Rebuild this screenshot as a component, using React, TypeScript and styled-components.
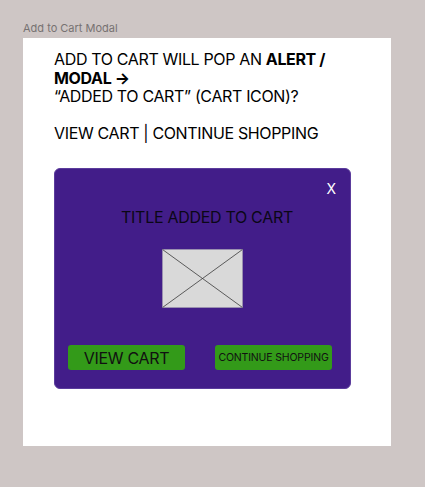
import React from "react";
import styled, { createGlobalStyle } from "styled-components";

const Global = createGlobalStyle`
  html, body { margin: 0; padding: 0; background: #cec6c5; }
  body { font-family: Inter, "Noto Sans", sans-serif; }
`;

const Page = styled.div`
  padding: 22px 0 0 23px;
  width: 425px;
  height: 487px;
  box-sizing: border-box;
`;

const Label = styled.div`
  font-size: 11px;
  line-height: 13px;
  color: #777272;
  margin-bottom: 3px;
`;

const Frame = styled.div`
  width: 368px;
  height: 408px;
  background: #ffffff;
  box-sizing: border-box;
  padding: 12px 0 0 31px;
  display: flex;
  flex-direction: column;
`;

const Notes = styled.div`
  font-size: 16px;
  line-height: 18.6px;
  letter-spacing: -0.35px;
  color: #000;
  margin-bottom: 25px;
`;

const Line = styled.div<{ $gapAbove?: boolean }>`
  margin-top: ${(p) => (p.$gapAbove ? "18.6px" : "0")};
`;

const Modal = styled.div`
  width: 297px;
  height: 221px;
  box-sizing: border-box;
  background: #421d89;
  border: 1px solid #5b3c9c;
  border-radius: 6px;
  display: flex;
  flex-direction: column;
  align-items: center;
  padding: 11px 0 0;
`;

const CloseRow = styled.div`
  align-self: stretch;
  display: flex;
  justify-content: flex-end;
  padding-right: 14px;
`;

const Close = styled.span`
  color: #ffffff;
  font-size: 14px;
  line-height: 17px;
`;

const Title = styled.div`
  margin: 11px 0 0 9px;
  font-size: 16px;
  line-height: 19.4px;
  color: #0b0716;
  letter-spacing: -0.3px;
`;

const Placeholder = styled.svg`
  margin-top: 22px;
  width: 81px;
  height: 59px;
  display: block;
`;

const Buttons = styled.div`
  align-self: stretch;
  display: flex;
  gap: 30px;
  padding-left: 13px;
  margin-top: 37px;
`;

const Button = styled.div<{ $small?: boolean }>`
  width: 117px;
  height: 25px;
  background: #339a19;
  border-radius: 3px;
  display: flex;
  align-items: center;
  justify-content: center;
  color: #111;
  font-size: ${(p) => (p.$small ? "10.5px" : "16px")};
  letter-spacing: ${(p) => (p.$small ? "-0.15px" : "-0.3px")};
  white-space: nowrap;
`;

export default function App() {
  return (
    <>
      <Global />
      <Page>
        <Label>Add to Cart Modal</Label>
        <Frame>
          <Notes>
            <Line>
              ADD TO CART WILL POP AN <b>ALERT /</b>
            </Line>
            <Line>
              <b>MODAL →</b>
            </Line>
            <Line>“ADDED TO CART” (CART ICON)?</Line>
            <Line $gapAbove>VIEW CART | CONTINUE SHOPPING</Line>
          </Notes>
          <Modal>
            <CloseRow>
              <Close>X</Close>
            </CloseRow>
            <Title>TITLE ADDED TO CART</Title>
            <Placeholder viewBox="0 0 81 59">
              <rect x="0.5" y="0.5" width="80" height="58" fill="#d9d9d9" stroke="#9a90b0" strokeWidth="1" />
              <line x1="0.5" y1="0.5" x2="80.5" y2="58.5" stroke="#3a3a3a" strokeWidth="0.8" />
              <line x1="80.5" y1="0.5" x2="0.5" y2="58.5" stroke="#3a3a3a" strokeWidth="0.8" />
            </Placeholder>
            <Buttons>
              <Button>VIEW CART</Button>
              <Button $small>CONTINUE SHOPPING</Button>
            </Buttons>
          </Modal>
        </Frame>
      </Page>
    </>
  );
}
